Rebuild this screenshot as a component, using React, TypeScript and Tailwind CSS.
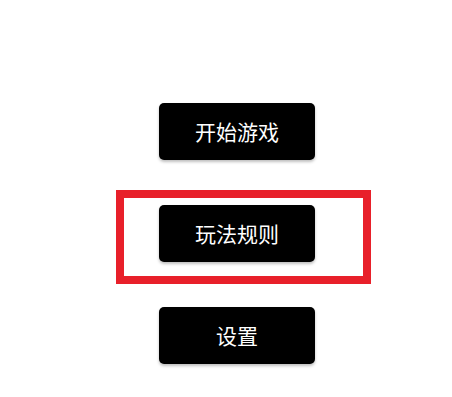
import React from "react";

const btn =
  "w-[156px] h-[57px] bg-black rounded-[5px] text-white text-[21px] flex items-center justify-center shadow-[0_2px_3px_rgba(0,0,0,0.25)]";

export default function App() {
  return (
    <div
      className="relative w-[452px] h-[397px] bg-white overflow-hidden"
      style={{ fontFamily: '"Noto Sans CJK SC", "Noto Sans", sans-serif' }}
    >
      <div className="flex flex-col gap-[45px] pl-[159px] pt-[103px]">
        <button className={btn}>开始游戏</button>
        <button className={btn}>玩法规则</button>
        <button className={btn}>设置</button>
      </div>
      <div className="absolute left-[116px] top-[190px] w-[255px] h-[94px] border-[8px] border-[#e8202a] pointer-events-none" />
    </div>
  );
}
